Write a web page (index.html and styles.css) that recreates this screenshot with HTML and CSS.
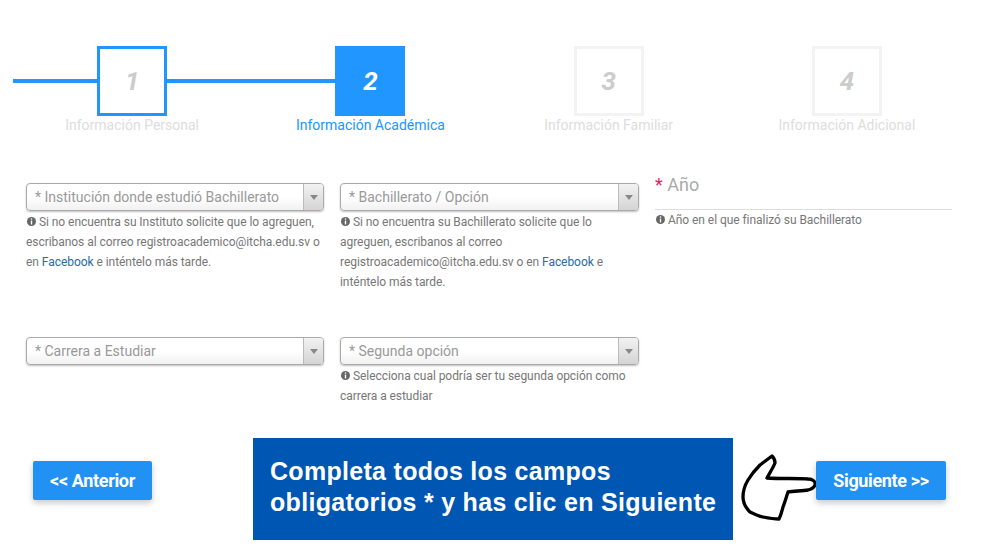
FILE: index.html
```html
<!DOCTYPE html>
<html lang="es">
<head>
    <meta charset="UTF-8">
    <title>Información Académica</title>
    <link rel="stylesheet" href="styles.css">
</head>
<body>
    <svg class="defs" width="0" height="0">
        <symbol id="info" viewBox="0 0 8 8">
            <circle cx="4" cy="4" r="4" fill="#666"/>
            <rect x="3.4" y="1.2" width="1.2" height="1.2" fill="#fff"/>
            <rect x="3.4" y="3.2" width="1.2" height="3.4" fill="#fff"/>
        </symbol>
    </svg>

    <div class="wizard">
        <div class="step done">
            <div class="track">
                <span class="line on"></span>
                <div class="box">1</div>
                <span class="line on"></span>
            </div>
            <div class="label">Información Personal</div>
        </div>
        <div class="step active">
            <div class="track">
                <span class="line on"></span>
                <div class="box">2</div>
                <span class="line"></span>
            </div>
            <div class="label">Información Académica</div>
        </div>
        <div class="step">
            <div class="track">
                <span class="line"></span>
                <div class="box">3</div>
                <span class="line"></span>
            </div>
            <div class="label">Información Familiar</div>
        </div>
        <div class="step">
            <div class="track">
                <span class="line"></span>
                <div class="box">4</div>
                <span class="line"></span>
            </div>
            <div class="label">Información Adicional</div>
        </div>
    </div>

    <div class="form">
        <div class="field">
            <div class="select">
                <span class="value">* Institución donde estudió Bachillerato</span>
                <span class="arrow"></span>
            </div>
            <p class="help"><svg class="info"><use href="#info"/></svg> Si no encuentra su Instituto solicite que lo agreguen, escribanos al correo registroacademico@itcha.edu.sv o en <a href="#">Facebook</a> e inténtelo más tarde.</p>
        </div>
        <div class="field">
            <div class="select">
                <span class="value">* Bachillerato / Opción</span>
                <span class="arrow"></span>
            </div>
            <p class="help"><svg class="info"><use href="#info"/></svg> Si no encuentra su Bachillerato solicite que lo agreguen, escribanos al correo registroacademico@itcha.edu.sv o en <a href="#">Facebook</a> e inténtelo más tarde.</p>
        </div>
        <div class="field">
            <div class="year"><span class="req">*</span> Año</div>
            <p class="help"><svg class="info"><use href="#info"/></svg> Año en el que finalizó su Bachillerato</p>
        </div>
        <div class="field">
            <div class="select">
                <span class="value">* Carrera a Estudiar</span>
                <span class="arrow"></span>
            </div>
        </div>
        <div class="field">
            <div class="select">
                <span class="value">* Segunda opción</span>
                <span class="arrow"></span>
            </div>
            <p class="help"><svg class="info"><use href="#info"/></svg> Selecciona cual podría ser tu segunda opción como carrera a estudiar</p>
        </div>
    </div>

    <div class="actions">
        <button class="btn prev">&lt;&lt; Anterior</button>
        <div class="banner">Completa todos los campos<br>obligatorios * y has clic en Siguiente</div>
        <svg class="hand" viewBox="0 0 76 70" width="76" height="70">
            <path d="M32 4 C34 6 35 9 35 11 C33 16 29 22 27 26 C40 27 58 26 68 27 C73 27 76 30 75 33 C74 36 72 37 68 38 C62 39 54 39 48 40 C46 46 45 50 43 55 C42 59 41 63 39 67 C33 67 28 66 23 65 C18 64 14 62 10 60 C6 56 3 50 3 45 C3 38 5 33 8 28 C11 23 15 18 20 13 C24 10 28 7 32 4 Z" fill="#fff" stroke="#000" stroke-width="3.300" stroke-linejoin="round"/>
        </svg>
        <button class="btn next">Siguiente &gt;&gt;</button>
    </div>
</body>
</html>
```

FILE: styles.css
```css
* {
    margin: 0;
    padding: 0;
    box-sizing: border-box;
}

body {
    background: #fff;
    font-family: Roboto, "Liberation Sans", sans-serif;
    overflow: hidden;
}

.defs {
    display: block;
}

.wizard {
    display: flex;
    padding: 46px 19px 0 13px;
}

.step {
    flex: 1;
    text-align: center;
}

.track {
    display: flex;
    align-items: center;
}

.line {
    flex: 1;
    height: 4px;
}

.line.on {
    background: #2196ff;
}

.box {
    width: 70px;
    height: 70px;
    display: flex;
    align-items: center;
    justify-content: center;
    border: 3px solid #f3f3f3;
    color: #ccc;
    font-size: 26px;
    font-weight: 700;
    font-style: italic;
}

.label {
    font-size: 14px;
    line-height: 18px;
    color: #ddd;
}

.done .box {
    border-color: #2196ff;
}

.active .box {
    background: #2196ff;
    border-color: #2196ff;
    color: #fff;
}

.active .label {
    color: #2196ff;
}

.form {
    display: grid;
    grid-template-columns: 298px 299px 297px;
    column-gap: 16px;
    row-gap: 45px;
    margin: 49px 0 0 26px;
}

.select {
    display: flex;
    height: 28px;
    border: 1px solid #aaa;
    border-radius: 4px;
    background: linear-gradient(#fff 50%, #f1f1f1);
    box-shadow: 0 1px 2px rgba(0, 0, 0, 0.25);
    overflow: hidden;
}

.value {
    flex: 1;
    padding-left: 8px;
    font-size: 14px;
    line-height: 26px;
    color: #999;
}

.arrow {
    width: 20px;
    display: flex;
    align-items: center;
    justify-content: center;
    border-left: 1px solid #bbb;
    background: linear-gradient(#f2f2f2, #d4d4d4);
}

.arrow::before {
    content: "";
    border-left: 4px solid transparent;
    border-right: 4px solid transparent;
    border-top: 5px solid #888;
}

.help {
    margin-top: 1px;
    font-size: 12px;
    line-height: 20px;
    letter-spacing: -0.05px;
    color: #777;
}

.help a {
    color: #2a6aa5;
    text-decoration: none;
}

.info {
    width: 9px;
    height: 9px;
    margin-left: 1px;
}

.year {
    height: 27px;
    border-bottom: 1px solid #ddd;
    font-size: 18px;
    line-height: 4px;
    color: #aaa;
}

.year + .help {
    margin-top: 0;
}

.req {
    color: #e91e63;
}

.actions {
    display: flex;
    align-items: flex-start;
    margin-top: 32px;
    padding-left: 33px;
}

.btn {
    height: 39px;
    margin-top: 23px;
    border: none;
    border-radius: 2px;
    background: #2191f3;
    box-shadow: 0 3px 6px rgba(0, 0, 0, 0.22);
    color: #fff;
    font-family: Roboto, sans-serif;
    font-size: 18px;
    font-weight: 700;
    letter-spacing: -0.35px;
}

.prev {
    width: 119px;
    margin-right: 101px;
}

.next {
    width: 130px;
}

.banner {
    width: 480px;
    height: 102px;
    padding: 18px 0 0 17px;
    background: #0056b3;
    color: #fff;
    font-family: "Liberation Sans", Arial, sans-serif;
    font-size: 25px;
    font-weight: 700;
    line-height: 31px;
    letter-spacing: 0.3px;
}

.hand {
    margin: 14px 0 0 7px;
    flex-shrink: 0;
}
```
